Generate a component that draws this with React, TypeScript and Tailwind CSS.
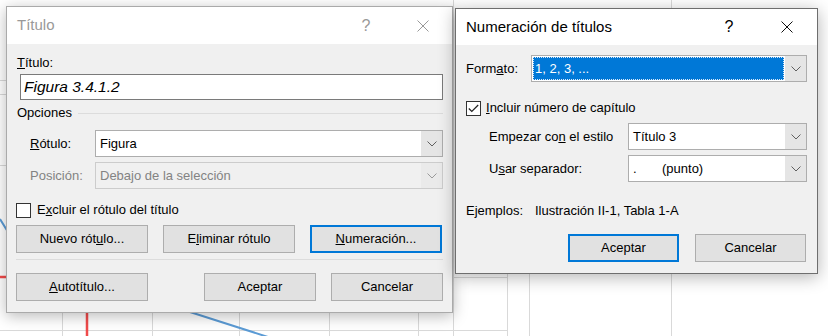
import type { ReactNode } from "react";

function Chevron({ color = "#606060" }: { color?: string }) {
  return (
    <svg width="10" height="6" viewBox="0 0 10 6">
      <polyline points="0.5,0.5 5,5 9.5,0.5" fill="none" stroke={color} strokeWidth="1" />
    </svg>
  );
}

function CloseIcon({ color }: { color: string }) {
  return (
    <svg width="12" height="12" viewBox="0 0 12 12">
      <path d="M0.5 0.5 L11.5 11.5 M11.5 0.5 L0.5 11.5" stroke={color} strokeWidth="1" />
    </svg>
  );
}

function Combo({
  children,
  disabled = false,
  className = "",
}: {
  children: ReactNode;
  disabled?: boolean;
  className?: string;
}) {
  return (
    <div
      className={`flex h-[27px] border ${
        disabled ? "border-[#cccccc] bg-[#f0f0f0] text-[#838383]" : "border-[#adadad] bg-white text-black"
      } ${className}`}
    >
      <div className="flex flex-1 items-center pl-[4px]">{children}</div>
      <div className={`flex w-[21px] items-center justify-center ${disabled ? "bg-[#eaeaea]" : "bg-[#e5e5e5]"}`}>
        <Chevron color={disabled ? "#9a9a9a" : "#606060"} />
      </div>
    </div>
  );
}

function Button({
  children,
  focused = false,
  className = "",
}: {
  children: ReactNode;
  focused?: boolean;
  className?: string;
}) {
  return (
    <div
      className={`flex h-[28px] items-center justify-center bg-[#e1e1e1] ${
        focused ? "border-2 border-[#0078d7]" : "border border-[#adadad]"
      } ${className}`}
    >
      {children}
    </div>
  );
}

function Checkbox({ checked = false }: { checked?: boolean }) {
  return (
    <div className="flex h-[15px] w-[15px] items-center justify-center border border-[#333333] bg-white">
      {checked && (
        <svg width="11" height="9" viewBox="0 0 11 9">
          <polyline points="0.8,4.5 3.8,7.5 10.2,1" fill="none" stroke="#222" strokeWidth="1.2" />
        </svg>
      )}
    </div>
  );
}

function Background() {
  return (
    <svg className="absolute inset-0" width="828" height="336" viewBox="0 0 828 336">
      <g stroke="#d9d9d9" strokeWidth="1">
        <line x1="0" y1="80.5" x2="8" y2="80.5" />
        <line x1="0" y1="94.5" x2="8" y2="94.5" />
        <line x1="0" y1="165.5" x2="8" y2="165.5" />
        <line x1="0" y1="330.5" x2="508" y2="330.5" />
        <line x1="452" y1="277.5" x2="508" y2="277.5" />
        <line x1="62.5" y1="300" x2="62.5" y2="336" />
        <line x1="152.5" y1="300" x2="152.5" y2="336" />
        <line x1="239.5" y1="300" x2="239.5" y2="336" />
        <line x1="329.5" y1="300" x2="329.5" y2="336" />
        <line x1="418.5" y1="300" x2="418.5" y2="336" />
        <line x1="507.5" y1="260" x2="507.5" y2="336" />
        <line x1="529.5" y1="260" x2="529.5" y2="336" />
        <line x1="671.5" y1="0" x2="671.5" y2="336" />
        <line x1="453.5" y1="0" x2="453.5" y2="336" />
      </g>
      <polyline points="0,277 87,277 87,336" fill="none" stroke="#f04a4a" strokeWidth="2.5" />
      <polyline points="0,219 8,232 120,290 190,312 268,337" fill="none" stroke="#5b9bd5" strokeWidth="2" />
    </svg>
  );
}

function TituloDialog() {
  return (
    <div className="absolute left-[6px] top-[6px] flex h-[307px] w-[447px] flex-col border border-[#aaaaaa] bg-[#f0f0f0] shadow-[0_3px_14px_rgba(0,0,0,0.28)]">
      <div className="flex h-[37px] items-center bg-white pl-[10px]">
        <span className="text-[15px] text-[#999999]">Título</span>
        <div className="ml-auto mr-[6px] flex items-center gap-[11px]">
          <span className="flex w-[46px] justify-center text-[16px] text-[#999999]">?</span>
          <span className="flex w-[46px] justify-center">
            <CloseIcon color="#999999" />
          </span>
        </div>
      </div>
      <div className="flex flex-1 flex-col pl-[9px] pr-[9px] text-[13px] text-black">
        <div className="ml-[1px] mt-[9px] h-[20px] leading-[20px]">
          <span className="underline">T</span>ítulo:
        </div>
        <div className="ml-[4px] mt-[1px] flex h-[26px] items-center border border-[#7a7a7a] bg-white pl-[3px] text-[15.5px] italic">
          Figura 3.4.1.2
        </div>
        <div className="mt-[3px] flex h-[20px] items-center">
          <span className="ml-[1px]">Opciones</span>
          <div className="ml-[6px] h-px flex-1 bg-[#dcdcdc]" />
        </div>
        <div className="mt-[7px] flex h-[27px] items-center">
          <span className="w-[79px] pl-[14px]">
            <span className="underline">R</span>ótulo:
          </span>
          <Combo className="flex-1">Figura</Combo>
        </div>
        <div className="mt-[5px] flex h-[27px] items-center">
          <span className="w-[79px] pl-[14px] text-[#838383]">Posición:</span>
          <Combo className="flex-1" disabled>
            Debajo de la selección
          </Combo>
        </div>
        <div className="mt-[11px] flex h-[20px] items-center">
          <Checkbox />
          <span className="ml-[6px]">
            E<span className="underline">x</span>cluir el rótulo del título
          </span>
        </div>
        <div className="mt-[5px] flex gap-[15px]">
          <Button className="w-[132px]">
            Nuevo rót<span className="underline">u</span>lo...
          </Button>
          <Button className="w-[132px]">
            E<span className="underline">l</span>iminar rótulo
          </Button>
          <Button className="w-[132px]" focused>
            <span className="underline">N</span>umeración...
          </Button>
        </div>
        <div className="mt-[6px] h-px bg-[#dcdcdc]" />
        <div className="mt-[13px] flex">
          <Button className="w-[132px]">
            <span className="underline">A</span>utotítulo...
          </Button>
          <div className="ml-auto flex gap-[15px]">
            <Button className="w-[112px]">Aceptar</Button>
            <Button className="w-[112px]">Cancelar</Button>
          </div>
        </div>
      </div>
    </div>
  );
}

function NumeracionDialog() {
  return (
    <div className="absolute left-[455px] top-[8px] flex h-[266px] w-[363px] flex-col border border-[#6e6e6e] bg-[#f0f0f0] shadow-[0_3px_16px_rgba(0,0,0,0.3)]">
      <div className="flex h-[36px] items-center bg-white pl-[10px]">
        <span className="text-[15px] text-black">Numeración de títulos</span>
        <div className="ml-auto mr-[7px] flex items-center gap-[12px]">
          <span className="flex w-[46px] justify-center text-[16px] text-black">?</span>
          <span className="flex w-[46px] justify-center">
            <CloseIcon color="#111111" />
          </span>
        </div>
      </div>
      <div className="flex flex-1 flex-col pl-[10px] pr-[10px] text-[13px] text-black">
        <div className="mt-[10px] flex h-[27px] items-center">
          <span className="w-[65px]">
            Form<span className="underline">a</span>to:
          </span>
          <div className="flex h-[27px] flex-1 border border-[#adadad] bg-white">
            <div className="m-[1px] flex flex-1 items-center border border-dotted border-[#d9e8f7] bg-[#0078d7] pl-[1px] text-white">
              1, 2, 3, ...
            </div>
            <div className="flex w-[21px] items-center justify-center bg-[#e5e5e5]">
              <Chevron />
            </div>
          </div>
        </div>
        <div className="mt-[16px] flex h-[20px] items-center">
          <Checkbox checked />
          <span className="ml-[5px]">
            <span className="underline">I</span>ncluir número de capítulo
          </span>
        </div>
        <div className="mt-[5px] flex h-[27px] items-center">
          <span className="w-[162px] pl-[23px]">
            Empezar co<span className="underline">n</span> el estilo
          </span>
          <Combo className="flex-1">Título 3</Combo>
        </div>
        <div className="mt-[5px] flex h-[27px] items-center">
          <span className="w-[162px] pl-[23px]">
            U<span className="underline">s</span>ar separador:
          </span>
          <Combo className="flex-1">
            <span className="w-[29px]">.</span>
            <span>(punto)</span>
          </Combo>
        </div>
        <div className="mt-[19px] flex h-[20px] items-center">
          <span className="w-[69px]">Ejemplos:</span>
          <span>Ilustración II-1, Tabla 1-A</span>
        </div>
        <div className="mt-[13px] flex justify-end gap-[16px] pr-[1px]">
          <Button className="w-[111px]" focused>
            Aceptar
          </Button>
          <Button className="w-[111px]">Cancelar</Button>
        </div>
      </div>
    </div>
  );
}

export default function App() {
  return (
    <div className="relative h-[336px] w-[828px] overflow-hidden bg-white font-['Liberation_Sans',Arial,sans-serif]">
      <Background />
      <TituloDialog />
      <NumeracionDialog />
    </div>
  );
}
